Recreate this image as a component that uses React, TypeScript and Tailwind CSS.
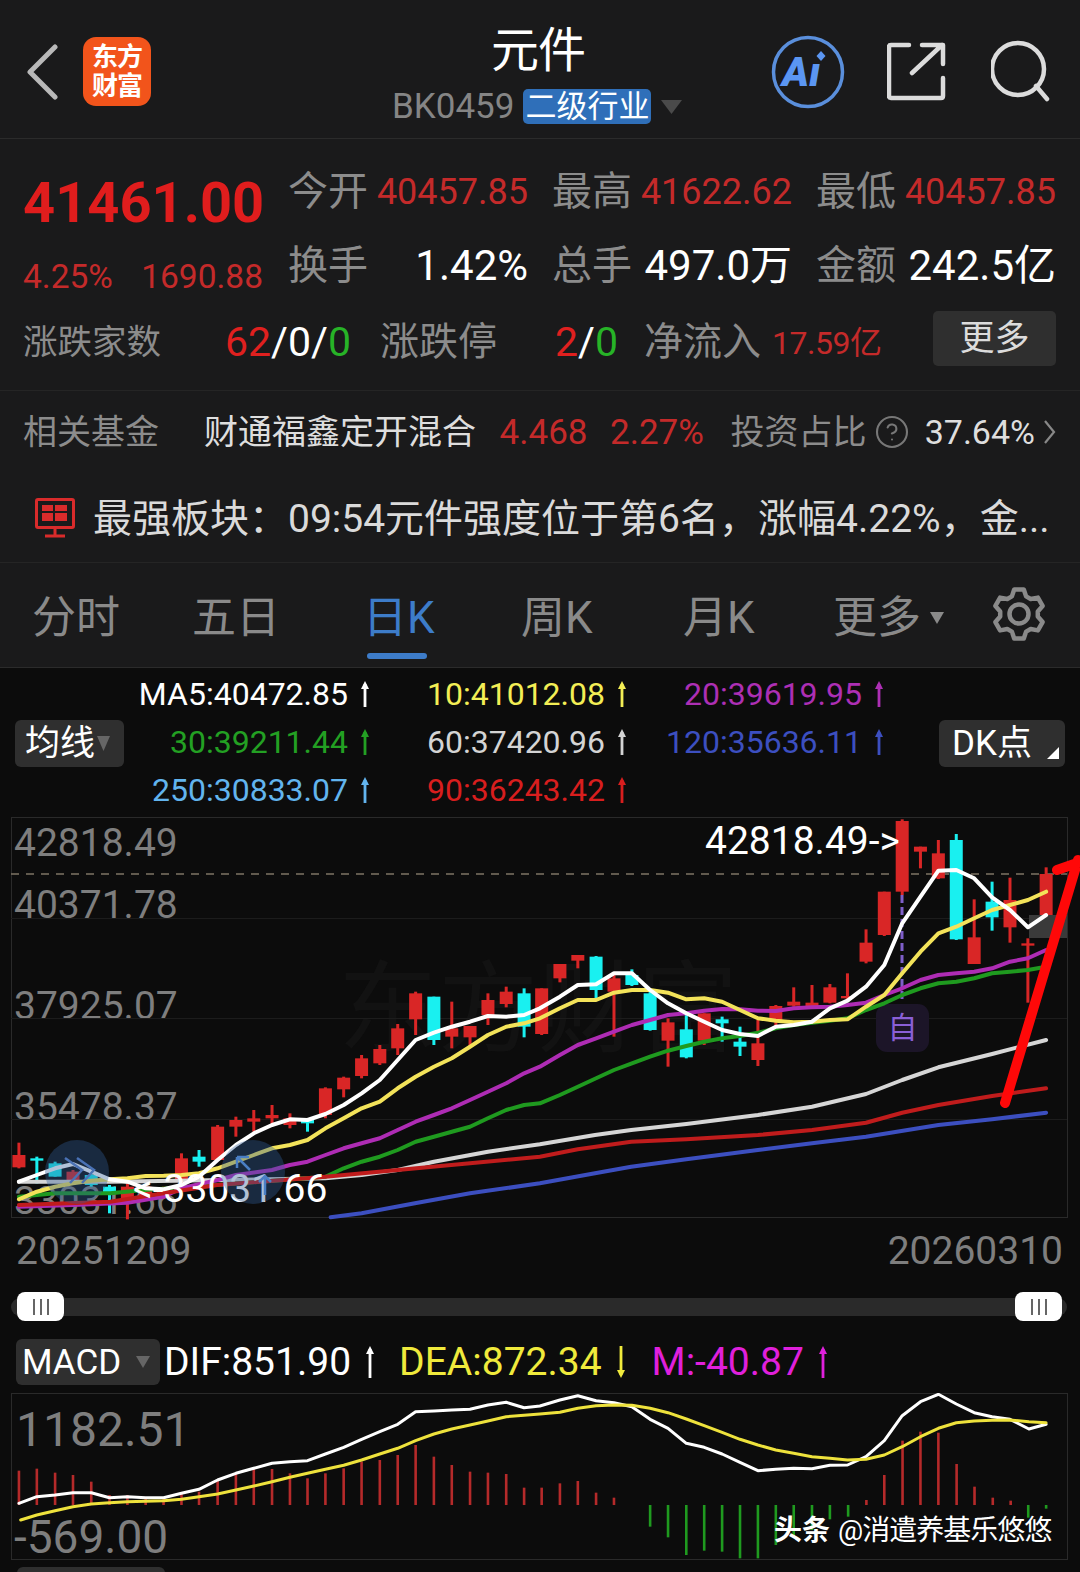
import React from "react";
import { CircleHelp } from "lucide-react";

const RED = "#e0201f";
const DRED = "#c42a2a";
type P = [number, number];
const R = 1568;
const sx = 2.904;

// candles in crop coordinates: zx, wickTop, wickBottom, bodyTop, bodyBottom, colour
const left: [number, number, number, number, number, string][] = [
  [55, 998, 1075, 1035, 1072, "r"], [107, 1040, 1120, 1045, 1052, "c"], [160, 1055, 1100, 1060, 1100, "c"], [212, 1080, 1112, 1085, 1110, "r"],
  [265, 1090, 1130, 1095, 1125, "c"], [318, 1125, 1210, 1130, 1150, "c"], [370, 1120, 1228, 1130, 1175, "r"], [423, 1125, 1170, 1130, 1165, "r"],
  [475, 1130, 1165, 1135, 1155, "r"], [527, 1030, 1110, 1045, 1110, "r"], [578, 1020, 1070, 1040, 1055, "c"], [632, 945, 1050, 950, 1050, "r"],
  [685, 920, 980, 930, 950, "r"], [737, 900, 965, 925, 935, "r"], [790, 885, 945, 915, 925, "r"], [842, 910, 955, 925, 945, "r"],
  [893, 925, 965, 928, 940, "c"], [945, 832, 925, 835, 915, "r"], [998, 800, 862, 803, 838, "r"], [1050, 735, 805, 745, 798, "r"],
  [1103, 705, 765, 717, 760, "r"], [1155, 642, 735, 655, 715, "r"], [1207, 545, 675, 550, 628, "r"], [1260, 560, 705, 560, 690, "c"],
  [1312, 575, 715, 655, 680, "r"], [1365, 648, 710, 648, 682, "r"], [1417, 550, 645, 570, 615, "r"], [1470, 530, 592, 545, 582, "r"],
  [1522, 535, 682, 550, 650, "c"],
];
const right: [number, number, number, number, number, string][] = [
  [5, 535, 675, 535, 672, "r"], [58, 462, 517, 462, 505, "r"], [110, 435, 475, 435, 452, "r"], [163, 438, 570, 440, 540, "c"],
  [215, 490, 680, 505, 545, "r"], [267, 478, 528, 495, 525, "c"], [320, 540, 662, 550, 660, "c"], [372, 625, 770, 637, 692, "r"],
  [425, 610, 745, 658, 742, "c"], [477, 610, 705, 610, 692, "r"], [529, 620, 695, 628, 640, "c"], [581, 650, 738, 695, 710, "c"],
  [633, 630, 768, 700, 750, "r"], [685, 585, 660, 588, 635, "r"], [737, 532, 590, 575, 587, "r"], [790, 525, 590, 578, 590, "r"],
  [842, 522, 580, 532, 578, "r"], [893, 490, 570, 558, 565, "r"], [947, 358, 460, 398, 455, "r"], [1000, 245, 378, 245, 375, "r"],
  [1052, 28, 255, 33, 245, "r"], [1105, 110, 175, 110, 125, "r"], [1157, 90, 207, 130, 205, "r"], [1209, 72, 390, 90, 388, "c"],
  [1261, 268, 462, 382, 462, "r"], [1313, 215, 362, 275, 322, "c"], [1365, 203, 398, 270, 352, "r"], [1417, 385, 578, 400, 407, "r"],
  [1470, 172, 315, 192, 315, "r"],
];

const pts = (l: P[], r: P[], off = 0) =>
  [...l.map(([x, y]) => `${(x / sx).toFixed(1)},${(y / 3 + off).toFixed(1)}`), ...r.map(([x, y]) => `${((x + R) / sx).toFixed(1)},${(y / 3 + off).toFixed(1)}`)].join(" ");

const ma5 = pts([[55,1115],[107,1095],[160,1075],[212,1062],[265,1085],[318,1108],[370,1115],[423,1135],[475,1138],[527,1125],[578,1100],[632,1050],[685,1005],[737,970],[790,945],[842,928],[893,930],[945,912],[998,885],[1050,850],[1103,810],[1155,750],[1207,690],[1260,668],[1312,650],[1365,635],[1417,618],[1470,620],[1522,615]],
  [[0,595],[58,560],[110,525],[163,523],[215,490],[267,490],[320,540],[372,580],[425,610],[477,635],[529,660],[581,672],[633,678],[685,650],[737,645],[790,635],[842,595],[893,572],[947,530],[1000,465],[1052,340],[1105,260],[1157,182],[1209,180],[1261,205],[1313,262],[1365,300],[1417,352],[1470,315]]);
const ma10 = pts([[55,1168],[107,1145],[160,1130],[212,1120],[265,1112],[318,1108],[370,1105],[423,1098],[475,1097],[527,1095],[578,1090],[632,1075],[685,1055],[737,1035],[790,1015],[842,1005],[893,990],[945,955],[998,925],[1050,895],[1103,875],[1155,835],[1207,800],[1260,770],[1312,745],[1365,710],[1417,675],[1470,650],[1522,640]],
  [[0,625],[58,595],[110,570],[163,570],[215,548],[267,540],[320,540],[372,548],[425,568],[477,565],[529,575],[581,600],[633,625],[685,632],[737,637],[790,635],[842,630],[893,628],[947,590],[1000,555],[1052,490],[1105,425],[1157,370],[1209,350],[1261,325],[1313,300],[1365,285],[1417,270],[1470,245]]);
const ma20 = pts([[55,1190],[212,1185],[370,1178],[475,1160],[527,1135],[632,1110],[685,1095],[790,1080],[842,1065],[893,1055],[945,1035],[998,1015],[1050,1000],[1103,985],[1155,960],[1207,935],[1260,915],[1312,895],[1365,870],[1417,845],[1470,820],[1522,790]],
  [[0,770],[58,735],[110,705],[163,685],[215,665],[267,645],[320,630],[372,615],[425,610],[477,602],[529,597],[581,598],[633,602],[685,603],[737,595],[790,592],[842,590],[893,585],[947,578],[1000,555],[1052,535],[1105,510],[1157,495],[1209,490],[1261,485],[1313,475],[1365,455],[1417,445],[1470,420]]);
const ma30 = pts([[55,1160],[160,1150],[320,1150],[420,1140],[630,1125],[945,1100],[998,1075],[1050,1055],[1103,1040],[1155,1020],[1207,995],[1260,980],[1312,965],[1365,950],[1417,925],[1470,900],[1522,885]],
  [[0,880],[58,855],[110,830],[163,805],[215,780],[267,760],[320,740],[372,722],[425,708],[477,695],[529,685],[581,678],[633,668],[685,655],[737,645],[790,638],[842,632],[893,625],[947,600],[1000,580],[1052,555],[1105,535],[1157,520],[1209,515],[1261,505],[1313,490],[1365,485],[1417,480],[1470,470]]);
const ma60 = pts([[55,1115],[320,1115],[945,1105],[1050,1095],[1155,1080],[1260,1055],[1417,1025]],
  [[0,1003],[160,975],[265,960],[425,942],[633,915],[790,890],[947,852],[1052,810],[1157,772],[1313,732],[1470,690]]);
const ma90 = pts([[55,1185],[320,1175],[475,1150],[630,1125],[945,1100],[1155,1080],[1365,1060]],
  [[0,1040],[110,1018],[265,995],[425,988],[633,975],[790,960],[947,938],[1052,908],[1157,885],[1313,858],[1470,835]]);
const ma120 = pts([[960,1222],[1050,1210],[1205,1180],[1365,1150]],
  [[0,1120],[160,1090],[265,1070],[425,1048],[633,1020],[790,1000],[947,980],[1157,945],[1313,928],[1470,908]]);

const barsL: P[] = [[55,722],[107,716],[160,728],[212,735],[265,755],[318,795],[370,795],[423,805],[475,805],[527,790],[578,785],[632,750],[685,730],[737,715],[790,717],[842,730],[893,745],[945,730],[998,715],[1050,695],[1103,690],[1155,675],[1207,645],[1260,680],[1312,705],[1365,725],[1417,728],[1470,732],[1522,773]];
const barsR: P[] = [[5,773],[58,760],[110,753],[163,788],[215,803],[320,890],[372,922],[425,975],[477,962],[529,965],[581,985],[633,985],[685,945],[737,920],[790,900],[842,868],[895,860],[948,810],[1000,735],[1053,632],[1105,605],[1157,608],[1210,702],[1262,770],[1315,803],[1367,812],[1418,863],[1470,836]];

const difL = pts([[55,820],[107,800],[160,795],[212,788],[265,788],[318,803],[370,800],[423,803],[475,803],[527,790],[578,778],[632,750],[685,730],[737,715],[790,700],[842,695],[893,692],[945,672],[998,652],[1050,628],[1103,605],[1155,583],[1207,545],[1260,543],[1312,540],[1365,538],[1417,525],[1470,517],[1522,533]],
  [[0,528],[58,510],[110,497],[163,512],[215,518],[267,530],[320,568],[372,595],[425,640],[477,652],[529,672],[581,697],[633,722],[685,718],[737,715],[790,716],[842,706],[893,705],[947,680],[1000,632],[1052,557],[1105,515],[1157,493],[1209,522],[1261,548],[1313,560],[1365,568],[1420,597],[1470,583]]);
const deaL = pts([[60,870],[107,855],[160,842],[212,830],[265,822],[318,818],[370,815],[475,812],[527,808],[578,800],[632,792],[685,780],[737,768],[790,755],[842,742],[893,730],[945,718],[998,706],[1050,690],[1103,672],[1155,655],[1207,632],[1260,612],[1312,597],[1365,585],[1417,573],[1470,560],[1522,556]],
  [[0,552],[58,547],[110,535],[163,527],[215,525],[267,526],[320,535],[372,548],[425,567],[477,587],[529,607],[581,628],[633,645],[685,660],[737,670],[790,680],[842,685],[893,690],[947,688],[1000,675],[1052,650],[1105,620],[1157,595],[1209,578],[1261,573],[1313,571],[1365,570],[1420,575],[1470,578]]);

const gearPath = (() => {
  const c = 28;
  const out = 25;
  const inn = 19;
  const p: string[] = [];
  for (let i = 0; i < 6; i++) {
    const a = -90 + i * 60;
    [[a - 22, inn], [a - 11, out], [a + 11, out], [a + 22, inn]].forEach(([d, r]) => {
      const t = (d * Math.PI) / 180;
      p.push(`${(c + r * Math.cos(t)).toFixed(1)} ${(c + r * Math.sin(t)).toFixed(1)}`);
    });
  }
  return "M" + p.join("L") + "Z";
})();

function Candle({ d, off }: { d: [number, number, number, number, number, string]; off: number }) {
  const [zx, wt, wb, bt, bb, c] = d;
  const x = (zx + off) / sx;
  const col = c === "r" ? "#d92626" : "#19f0f0";
  return (
    <g fill={col}>
      <rect x={x - 1.5} y={wt / 3} width={3} height={(wb - wt) / 3} />
      <rect x={x - 6.5} y={bt / 3} width={13} height={Math.max((bb - bt) / 3, 2)} />
    </g>
  );
}

function Arrow({ c, down, h = 26 }: { c: string; down?: boolean; h?: number }) {
  return (
    <svg width="10" height={h} viewBox={`0 0 10 ${h}`} className="shrink-0">
      <g transform={down ? `rotate(180 5 ${h / 2})` : undefined} fill={c}>
        <rect x="3.6" y="3" width="2.8" height={h - 3} />
        <path d="M5 0 L9 8 L1 8 Z" />
      </g>
    </svg>
  );
}

function Stat({ label, children }: { label: string; children: React.ReactNode }) {
  return (
    <div className="flex h-[74px] w-[239px] items-center justify-between">
      <span className="ml-[-1px] text-[40px] leading-none text-[#8c8c8c]">{label}</span>
      {children}
    </div>
  );
}

function Legend({ t, c }: { t: string; c: string }) {
  return (
    <div className="flex h-[48px] items-center justify-end gap-[12px] pr-[2px] text-[32px] leading-none" style={{ color: c }}>
      <span>{t}</span>
      <Arrow c={c} />
    </div>
  );
}

function Tab({ t, w, active }: { t: string; w: string; active?: boolean }) {
  return (
    <div className={`relative flex h-full items-center text-[44px] leading-none ${w} ${active ? "text-[#3d7cc9]" : "text-[#8a8a8a]"}`}>
      {t}
      {active && <span className="absolute bottom-[8px] left-[4px] h-[6px] w-[60px] rounded-full bg-[#3d7cc9]" />}
    </div>
  );
}

function Thumb({ className }: { className: string }) {
  return (
    <div className={`flex h-[29px] w-[47px] items-center justify-center gap-[5px] rounded-[8px] bg-white ${className}`}>
      <span className="h-[16px] w-[2px] bg-[#666]" />
      <span className="h-[16px] w-[2px] bg-[#666]" />
      <span className="h-[16px] w-[2px] bg-[#666]" />
    </div>
  );
}

export default function App() {
  return (
    <div className="h-[1572px] w-[1080px] overflow-hidden bg-[#0c0c0c] font-[Roboto,'Noto_Sans_CJK_SC',sans-serif]">
      <div className="bg-[#1a1a1b]">
        {/* header */}
        <header className="flex h-[139px] items-start border-b border-[#2b2b2b] pl-[26px]">
          <svg width="32" height="56" viewBox="0 0 32 56" className="mt-[44px] shrink-0" fill="none" stroke="#b9b9b9" strokeWidth="5" strokeLinecap="round" strokeLinejoin="round">
            <path d="M29 3 L4 28 L29 53" />
          </svg>
          <div className="ml-[25px] mt-[37px] flex h-[69px] w-[68px] shrink-0 flex-col items-center justify-center rounded-[13px] bg-[#f2541b] text-[26px] font-bold leading-[29px] text-white">
            <span className="tracking-[-1px]">东方</span>
            <span className="tracking-[-1px]">财富</span>
          </div>
          <div className="ml-[241px] flex w-[291px] shrink-0 flex-col">
            <span className="mt-[19px] pl-[99px] text-[48px] leading-[64px] tracking-[-1px] text-white">元件</span>
            <div className="mt-[6px] flex items-center">
              <span className="text-[35px] leading-[35px] text-[#858585]">BK0459</span>
              <span className="ml-[9px] flex h-[35px] w-[128px] items-center justify-center rounded-[5px] bg-[#2f6fb9] text-[31px] leading-none text-white">二级行业</span>
              <svg width="21" height="14" viewBox="0 0 21 14" className="ml-[10px]"><path d="M0 0H21L10.5 14Z" fill="#4a4a4a" /></svg>
            </div>
          </div>
          <svg width="74" height="74" viewBox="0 0 74 74" className="ml-[88px] mt-[35px] shrink-0" fill="none">
            <circle cx="37" cy="37" r="34.5" stroke="#5a8fdc" strokeWidth="3.5" />
            <text x="11" y="51" fontSize="41" fontWeight="900" fontStyle="italic" fill="#5b96f2" fontFamily="Roboto">Aı</text>
            <path d="M50 16 L54.5 21 L50 26 L45.5 21Z" fill="#5b96f2" />
          </svg>
          <svg width="60" height="60" viewBox="0 0 60 60" className="ml-[42px] mt-[42px] shrink-0" fill="none" stroke="#dcdcdc" strokeWidth="4.5" strokeLinecap="round" strokeLinejoin="round">
            <path d="M22 3 H4 Q2 3 2 5 V54 Q2 56 4 56 H54 Q56 56 56 54 V36" />
            <path d="M25 31 L55 3 M35 3 H56 V22" />
          </svg>
          <svg width="62" height="62" viewBox="0 0 62 62" className="ml-[44px] mt-[40px] shrink-0" fill="none" stroke="#dcdcdc" strokeWidth="4.5" strokeLinecap="round">
            <circle cx="27" cy="29" r="26" />
            <path d="M45 46 L56 59" />
          </svg>
        </header>

        {/* stats */}
        <section className="h-[252px] border-b border-[#252525] pl-[23px] pr-[24px] pt-[16px]">
          <div className="flex">
            <div className="w-[266px] shrink-0">
              <div className="flex h-[96px] items-center text-[56px] font-bold leading-none text-[#e01d1d]">41461.00</div>
              <div className="flex h-[52px] w-[240px] items-center justify-between text-[33.5px] leading-none text-[#c42a2a]">
                <span>4.25%</span>
                <span>1690.88</span>
              </div>
            </div>
            <div className="grid grid-cols-[239px_239px_239px] gap-x-[25px]">
              <Stat label="今开"><span className="text-[36px] leading-none" style={{ color: DRED }}>40457.85</span></Stat>
              <Stat label="最高"><span className="text-[36px] leading-none" style={{ color: DRED }}>41622.62</span></Stat>
              <Stat label="最低"><span className="text-[36px] leading-none" style={{ color: DRED }}>40457.85</span></Stat>
              <Stat label="换手"><span className="text-[42px] leading-none text-white">1.42%</span></Stat>
              <Stat label="总手"><span className="text-[42px] leading-none text-white">497.0万</span></Stat>
              <Stat label="金额"><span className="text-[42px] leading-none text-white">242.5亿</span></Stat>
            </div>
          </div>
          <div className="flex h-[76px] items-center pt-[3px]">
            <span className="w-[202px] text-[34.5px] leading-none text-[#8c8c8c]">涨跌家数</span>
            <span className="w-[155px] text-[41px] leading-none text-white">
              <span style={{ color: RED }}>62</span>/0/<span className="text-[#27b327]">0</span>
            </span>
            <span className="w-[175px] text-[39px] leading-none text-[#8c8c8c]">涨跌停</span>
            <span className="w-[89px] text-[41px] leading-none text-white">
              <span style={{ color: RED }}>2</span>/<span className="text-[#27b327]">0</span>
            </span>
            <span className="w-[128px] text-[39px] leading-none text-[#8c8c8c]">净流入</span>
            <span className="w-[161px] text-[32px] leading-none tracking-[-0.5px]" style={{ color: DRED }}>17.59亿</span>
            <span className="mt-[-8px] flex h-[55px] w-[123px] items-center justify-center rounded-[5px] bg-[#2f2f2f] text-[35px] leading-none text-[#dcdcdc]">更多</span>
          </div>
        </section>

        {/* fund row */}
        <div className="flex h-[82px] items-center pl-[23px] pr-[24px] text-[34px] leading-none">
          <span className="w-[182px] text-[#8c8c8c]">相关基金</span>
          <span className="w-[297px] text-[#dedede]">财通福鑫定开混合</span>
          <span className="w-[111px] text-[35px]" style={{ color: DRED }}>4.468</span>
          <span className="w-[121px] text-[35px]" style={{ color: DRED }}>2.27%</span>
          <span className="w-[145px] text-[#8c8c8c]">投资占比</span>
          <CircleHelp size={36} strokeWidth={1.4} className="ml-[-1px] shrink-0 text-[#777]" />
          <span className="ml-[15px] text-[#dedede]">37.64%</span>
          <svg width="12" height="26" viewBox="0 0 12 26" className="ml-[9px] shrink-0" fill="none" stroke="#888" strokeWidth="2.2"><path d="M1 2 L10 13 L1 24" /></svg>
        </div>

        {/* news */}
        <div className="flex h-[90px] items-center border-b border-[#252525] pl-[35px]">
          <svg width="40" height="40" viewBox="0 0 40 40" className="shrink-0" fill="none">
            <rect x="1.5" y="1.5" width="37" height="28" rx="1.5" stroke="#d92b2b" strokeWidth="3" />
            <rect x="7" y="7" width="11" height="6" fill="#d92b2b" />
            <rect x="20" y="7" width="12" height="6" fill="#d92b2b" />
            <rect x="7" y="15" width="11" height="8" fill="#d92b2b" />
            <rect x="20" y="15" width="12" height="8" fill="#d92b2b" />
            <path d="M20 30V37M10 38H30" stroke="#d92b2b" strokeWidth="3" />
          </svg>
          <span className="ml-[18px] mt-[3px] whitespace-nowrap text-[39px] leading-none text-[#dadada]">最强板块：09:54元件强度位于第6名，涨幅4.22%，金...</span>
        </div>

        {/* tabs */}
        <nav className="flex h-[104px] items-stretch pl-[32px] pt-[6px]">
          <Tab t="分时" w="w-[160px]" />
          <Tab t="五日" w="w-[171px]" />
          <Tab t="日K" w="w-[158px]" active />
          <Tab t="周K" w="w-[162px]" />
          <Tab t="月K" w="w-[150px]" />
          <Tab t="更多" w="w-[97px]" />
          <div className="flex items-center">
            <svg width="14" height="12" viewBox="0 0 14 12"><path d="M0 0H14L7 12Z" fill="#8a8a8a" /></svg>
            <svg width="56" height="56" viewBox="0 0 56 56" className="ml-[47px] mt-[-8px]" fill="none" stroke="#8a8a8a" strokeWidth="4.5" strokeLinejoin="round">
              <path d={gearPath} />
              <circle cx="28" cy="28" r="9.5" />
            </svg>
          </div>
        </nav>
      </div>

      {/* MA legend */}
      <div className="flex h-[143px] border-t border-[#2b2b2b] pl-[15px] pt-[2px]">
        <div className="mt-[50px] flex h-[47px] w-[109px] items-center rounded-[6px] bg-[#2f2f2f] pl-[10px] text-[35px] leading-none text-white">
          均线
          <svg width="13" height="15" viewBox="0 0 13 15" className="ml-[2px]"><path d="M0 0H13L6.5 15Z" fill="#666" /></svg>
        </div>
        <div className="grid grid-cols-[248px_257px_257px]">
          <Legend t="MA5:40472.85" c="#ffffff" />
          <Legend t="10:41012.08" c="#f3ee55" />
          <Legend t="20:39619.95" c="#ad2fb4" />
          <Legend t="30:39211.44" c="#23a023" />
          <Legend t="60:37420.96" c="#d4d4d4" />
          <Legend t="120:35636.11" c="#3c4fc0" />
          <Legend t="250:30833.07" c="#62b4ee" />
          <Legend t="90:36243.42" c="#d81e1e" />
        </div>
        <div className="ml-[53px] mt-[50px] flex h-[47px] w-[126px] items-center justify-between rounded-[6px] bg-[#2f2f2f] pl-[13px] pr-[6px] text-[35px] leading-none text-white">
          DK点
          <svg width="12" height="12" viewBox="0 0 12 12" className="mt-[18px]"><path d="M12 0V12H0Z" fill="#fff" /></svg>
        </div>
      </div>

      {/* K chart canvas */}
      <div className="relative h-[420px] w-[1080px]">
        <span className="absolute left-[338px] top-[150px] whitespace-nowrap text-[100px] leading-none text-[#121212]">东方财富</span>
        <span className="absolute left-[14px] top-[14px] text-[39px] leading-none text-[#7e7e7e]">42818.49</span>
        <span className="absolute left-[14px] top-[76px] text-[39px] leading-none text-[#7e7e7e]">40371.78</span>
        <span className="absolute left-[14px] top-[177px] text-[39px] leading-none text-[#7e7e7e]">37925.07</span>
        <span className="absolute left-[14px] top-[278px] text-[39px] leading-none text-[#7e7e7e]">35478.37</span>
        <span className="absolute left-[14px] top-[372px] text-[39px] leading-none text-[#7e7e7e]">33031.66</span>
        <svg width="1080" height="420" viewBox="0 0 1080 420" className="absolute left-0 top-0" fill="none">
          <rect x="11.5" y="7.5" width="1056" height="400" stroke="#2a2a2a" />
          <path d="M11 108.5H1067M11 208.5H1067M11 309.5H1067" stroke="#1c1c1c" />
          <path d="M11 64H1067" stroke="#7d7464" strokeWidth="1.5" strokeDasharray="8 7" />
          <rect x="1029" y="105" width="38" height="23" fill="#3a3a3a" />
          <path d="M902 85V190" stroke="#7f5fc9" strokeWidth="3" strokeDasharray="8 4" />
          <rect x="876" y="194" width="53" height="48" rx="11" fill="#1c1528" />
          {left.map((d, i) => <Candle key={i} d={d} off={0} />)}
          {right.map((d, i) => <Candle key={i} d={d} off={R} />)}
          <g strokeWidth="4" strokeLinejoin="round" strokeLinecap="round">
            <polyline points={ma120} stroke="#3c4fc0" />
            <polyline points={ma60} stroke="#d6d6d6" />
            <polyline points={ma30} stroke="#1f9a1f" />
            <polyline points={ma20} stroke="#ae2cb4" />
            <polyline points={ma90} stroke="#c01c1c" />
            <polyline points={ma10} stroke="#f3e35a" />
            <polyline points={ma5} stroke="#ffffff" />
          </g>
        </svg>
        <span className="absolute left-[705px] top-[12px] text-[39px] leading-none text-white">42818.49-&gt;</span>
        <span className="absolute left-[133px] top-[360px] text-[39px] leading-none text-white">&lt;-33031.66</span>
        <span className="absolute left-[876px] top-[194px] flex h-[48px] w-[53px] items-center justify-center text-[30px] leading-none text-[#8a5fd6]">自</span>
        <svg width="1080" height="420" viewBox="0 0 1080 420" className="absolute left-0 top-0" fill="none">
          <circle cx="77" cy="362" r="32" fill="#2f5d96" fillOpacity="0.38" />
          <circle cx="253" cy="362" r="32" fill="#2f5d96" fillOpacity="0.38" />
          <path d="M65 348 L82 360 L70 373 M77 348 L94 360 L82 373" stroke="#4a72b5" strokeWidth="2.5" />
          <path d="M237 347H249M237 347V358M237 347L250 360M265 367V385M259 372L265 366L271 372" stroke="#4a7fc5" strokeWidth="2.5" />
          <path d="M1005 293 L1078 50 M1057 60 L1080 52" stroke="#ff0808" strokeWidth="10" strokeLinecap="round" />
        </svg>
      </div>

      {/* dates */}
      <div className="flex h-[42px] items-center justify-between pl-[16px] pr-[17px] text-[39px] leading-none text-[#7e7e7e]">
        <span>20251209</span>
        <span>20260310</span>
      </div>

      {/* slider */}
      <div className="relative mx-[11px] mt-[26px] h-[18px] w-[1056px] rounded-full bg-[#2a2a2a]">
        <Thumb className="absolute left-[6px] top-[-6px]" />
        <Thumb className="absolute right-[5px] top-[-6px]" />
      </div>

      {/* MACD legend */}
      <div className="mt-[23px] flex h-[46px] items-center pl-[16px] text-[39px] leading-none">
        <div className="flex h-[46px] w-[144px] items-center rounded-[6px] bg-[#2f2f2f] pl-[6px] text-[35px] text-white">
          MACD
          <svg width="14" height="12" viewBox="0 0 14 12" className="ml-[15px]"><path d="M0 0H14L7 12Z" fill="#666" /></svg>
        </div>
        <span className="ml-[4px] text-white">DIF:851.90</span>
        <span className="ml-[14px]"><Arrow c="#ffffff" h={32} /></span>
        <span className="ml-[24px] text-[#f0ea3c]">DEA:872.34</span>
        <span className="ml-[14px]"><Arrow c="#f0ea3c" down h={32} /></span>
        <span className="ml-[26px] text-[#e020dc]">M:-40.87</span>
        <span className="ml-[14px]"><Arrow c="#e020dc" h={32} /></span>
      </div>

      {/* MACD canvas */}
      <div className="relative mt-[8px] h-[179px] w-[1080px]">
        <span className="absolute left-[16px] top-[13px] text-[48px] leading-none text-[#7e7e7e]">1182.51</span>
        <span className="absolute left-[14px] top-[121px] text-[46px] leading-none text-[#7e7e7e]">-569.00</span>
        <svg width="1080" height="179" viewBox="0 0 1080 179" className="absolute left-0 top-0" fill="none">
          <rect x="11.5" y="0.5" width="1056" height="166" stroke="#2a2a2a" />
          {barsL.map(([x, y], i) => (
            <rect key={i} x={x / sx - 1.3} y={y / 3 - 163} width="2.6" height={(825 - y) / 3} fill="#b52a2a" />
          ))}
          {barsR.map(([x, y], i) => {
            const up = y < 825;
            return (
              <rect key={i} x={(x + R) / sx - 1.3} y={(up ? y : 825) / 3 - 163} width="2.6" height={Math.abs(825 - y) / 3} fill={up ? "#b52a2a" : "#1f9a1f"} />
            );
          })}
          <g strokeWidth="3" strokeLinejoin="round" strokeLinecap="round" transform="translate(0 -163)">
            <polyline points={difL} stroke="#ffffff" />
            <polyline points={deaL} stroke="#eee23c" />
          </g>
        </svg>
        <span className="absolute left-[774px] top-[124px] flex items-center whitespace-nowrap text-[28px] leading-none text-white">
          <span className="font-bold">头条</span>
          <span className="ml-[8px] tracking-[-1px]">@消遣养基乐悠悠</span>
        </span>
      </div>
      <div className="ml-[17px] mt-[-5px] h-[12px] w-[148px] rounded-t-[6px] bg-[#2f2f2f]" />
    </div>
  );
}
